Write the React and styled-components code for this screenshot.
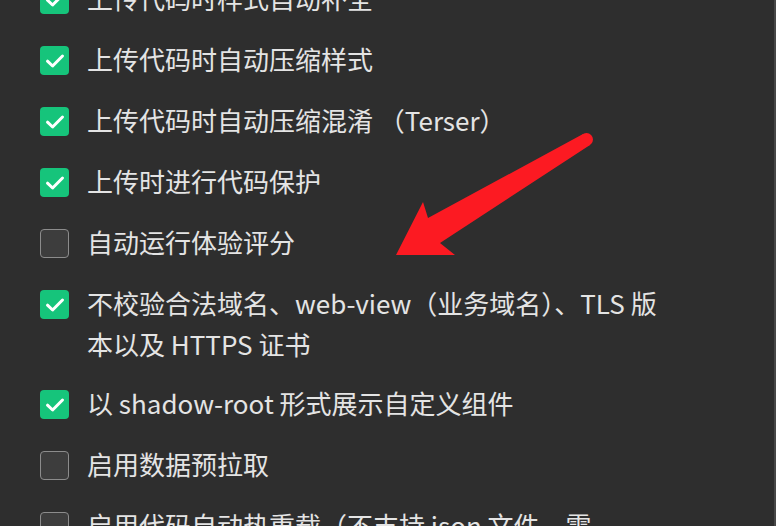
import React from "react";
import styled, { createGlobalStyle } from "styled-components";

const GlobalStyle = createGlobalStyle`
  html, body {
    margin: 0;
    padding: 0;
    background: #2e2e2e;
    overflow: hidden;
  }
  * { box-sizing: border-box; }
`;

const Page = styled.div`
  position: relative;
  width: 776px;
  height: 526px;
  overflow: hidden;
  background: #2e2e2e;
  border-right: 2px solid #474747;
  font-family: "Noto Sans CJK SC", "Noto Sans", sans-serif;
`;

const List = styled.ul`
  list-style: none;
  margin: -31px 0 0 0;
  padding: 0 0 0 40px;
  display: flex;
  flex-direction: column;
`;

const Item = styled.li`
  display: flex;
  align-items: flex-start;
  gap: 18px;
  padding: 10px 0;
`;

const BoxWrap = styled.span`
  flex: none;
  height: 41px;
  display: flex;
  align-items: center;
`;

const Box = styled.span`
  width: 29px;
  height: 29px;
  border-radius: 4px;
  display: flex;
  align-items: center;
  justify-content: center;
  background: ${(p) => (p.$checked ? "#16c47b" : "#3d3d3d")};
  border: ${(p) => (p.$checked ? "none" : "1.5px solid #8c8c8c")};
`;

const Label = styled.span`
  color: #e4e4e4;
  font-size: 26px;
  line-height: 41px;
  margin-top: -2px;
  max-width: 590px;
  letter-spacing: 0;
`;

const Arrow = styled.svg`
  position: absolute;
  left: 0;
  top: 0;
  pointer-events: none;
`;

const Check = () => (
  <svg width="20" height="16" viewBox="0 0 20 16">
    <path
      d="M2.5 8.2 L7.6 13 L17.5 3"
      fill="none"
      stroke="#ffffff"
      strokeWidth="3"
      strokeLinecap="round"
      strokeLinejoin="round"
    />
  </svg>
);

const items = [
  { text: "上传代码时样式自动补全", checked: true },
  { text: "上传代码时自动压缩样式", checked: true },
  { text: "上传代码时自动压缩混淆 （Terser）", checked: true },
  { text: "上传时进行代码保护", checked: true },
  { text: "自动运行体验评分", checked: false },
  { text: "不校验合法域名、web-view（业务域名）、TLS 版本以及 HTTPS 证书", checked: true },
  { text: "以 shadow-root 形式展示自定义组件", checked: true },
  { text: "启用数据预拉取", checked: false },
  { text: "启用代码自动热重载（不支持 json 文件，需", checked: false },
];

export default function App() {
  return (
    <>
      <GlobalStyle />
      <Page>
        <List>
          {items.map((it, i) => (
            <Item key={i}>
              <BoxWrap>
                <Box $checked={it.checked}>{it.checked && <Check />}</Box>
              </BoxWrap>
              <Label>{it.text}</Label>
            </Item>
          ))}
        </List>
        <Arrow width="776" height="526" viewBox="0 0 776 526">
          <polygon
            fill="#fc1a22"
            points="583,134 590,145 440,243 455,255 396,255 423,202 428,218"
          />
          <circle cx="586.5" cy="139.5" r="6.5" fill="#fc1a22" />
        </Arrow>
      </Page>
    </>
  );
}
